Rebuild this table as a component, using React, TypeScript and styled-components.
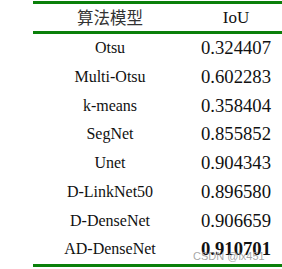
import styled, { createGlobalStyle } from "styled-components";

const GlobalStyle = createGlobalStyle`
  html, body {
    margin: 0;
    padding: 0;
    background: #fff;
    overflow: hidden;
  }
`;

const Page = styled.div`
  width: 282px;
  height: 269px;
  padding: 1px 0 0 33px;
  box-sizing: border-box;
  overflow: hidden;
`;

const Table = styled.table`
  border-collapse: collapse;
  width: 252px;
  table-layout: fixed;
  border-top: 3px solid #0a800a;
  border-bottom: 3px solid #0a800a;
  font-family: "Liberation Serif", "Times New Roman", serif;
  color: #111;
`;

const HeadRow = styled.tr`
  height: 27px;
  border-bottom: 3px solid #0a800a;
`;

const HeadCell = styled.th<{ $cjk?: boolean }>`
  padding: 0;
  font-weight: normal;
  text-align: center;
  vertical-align: middle;
  line-height: 27px;
  font-size: ${({ $cjk }) => ($cjk ? "16.5px" : "17px")};
  font-family: ${({ $cjk }) =>
    $cjk
      ? `"Noto Sans CJK SC", "Liberation Serif", serif`
      : `"Liberation Serif", "Times New Roman", serif`};
  color: ${({ $cjk }) => ($cjk ? "#333" : "#111")};
`;

const Row = styled.tr`
  height: 28.75px;
`;

const Name = styled.td`
  padding: 0;
  text-align: center;
  vertical-align: middle;
  font-size: 16px;
  line-height: 28.75px;
  white-space: nowrap;
`;

const Score = styled.td<{ $best?: boolean }>`
  position: relative;
  padding: 0;
  text-align: center;
  vertical-align: middle;
  font-size: 18.7px;
  line-height: 28.75px;
  font-weight: ${({ $best }) => ($best ? "bold" : "normal")};
`;

const Watermark = styled.span`
  position: absolute;
  left: 6px;
  top: 16px;
  font-family: "Liberation Sans", Arial, sans-serif;
  font-size: 11px;
  line-height: 11px;
  font-weight: normal;
  color: rgba(150, 150, 150, 0.85);
  white-space: nowrap;
`;

const rows: [string, string][] = [
  ["Otsu", "0.324407"],
  ["Multi-Otsu", "0.602283"],
  ["k-means", "0.358404"],
  ["SegNet", "0.855852"],
  ["Unet", "0.904343"],
  ["D-LinkNet50", "0.896580"],
  ["D-DenseNet", "0.906659"],
  ["AD-DenseNet", "0.910701"],
];

export default function App() {
  return (
    <>
      <GlobalStyle />
      <Page>
        <Table>
          <colgroup>
            <col style={{ width: 154 }} />
            <col style={{ width: 98 }} />
          </colgroup>
          <thead>
            <HeadRow>
              <HeadCell $cjk>算法模型</HeadCell>
              <HeadCell>IoU</HeadCell>
            </HeadRow>
          </thead>
          <tbody>
            {rows.map(([name, iou], i) => {
              const best = i === rows.length - 1;
              return (
                <Row key={name}>
                  <Name>{name}</Name>
                  <Score $best={best}>
                    {iou}
                    {best && <Watermark>CSDN @lx451</Watermark>}
                  </Score>
                </Row>
              );
            })}
          </tbody>
        </Table>
      </Page>
    </>
  );
}
